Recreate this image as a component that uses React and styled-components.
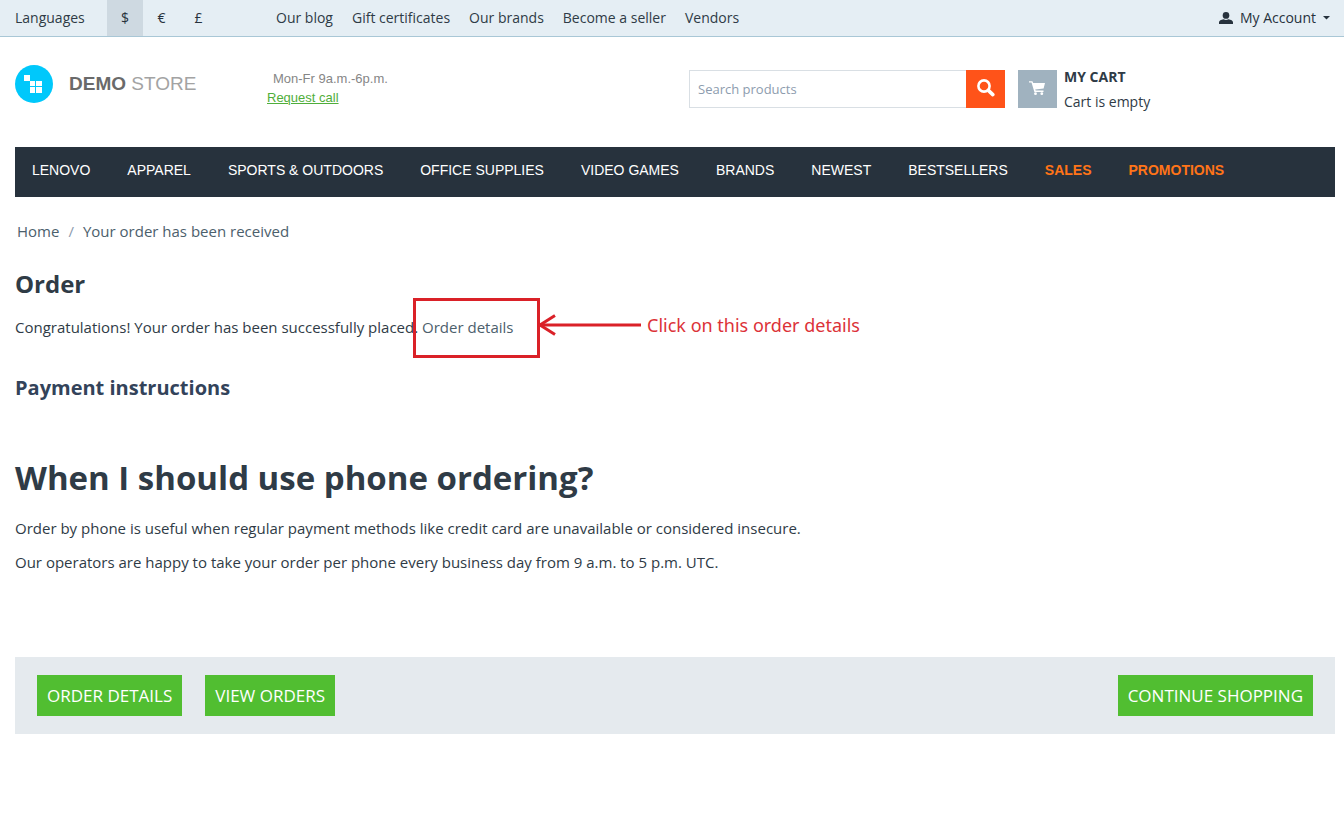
import React from "react";
import styled, { createGlobalStyle } from "styled-components";

const GlobalStyle = createGlobalStyle`
  *, *::before, *::after { box-sizing: border-box; }
  body {
    margin: 0;
    background: #fff;
    color: #2f3b46;
    font-family: "Open Sans", "Noto Sans", sans-serif;
    font-size: 15px;
    line-height: 24px;
  }
  h1, h2, h3, p, ul, ol { margin: 0; padding: 0; }
  ul, ol { list-style: none; }
  a { color: inherit; text-decoration: none; }
  button, input { font: inherit; border: 0; border-radius: 0; }
  button { cursor: pointer; }
`;

const TopBar = styled.div`
  display: flex;
  align-items: stretch;
  height: 37px;
  padding: 0 14px 0 15px;
  background: #e5eef4;
  border-bottom: 1px solid #a9c7d6;
  font-size: 14px;
  line-height: 36px;
`;

const LanguageLink = styled.a`
  width: 92px;
`;

const Currencies = styled.div`
  display: flex;
  width: 169px;
`;

const CurrencyButton = styled.button`
  width: ${(p) => (p.$active ? 36 : 37)}px;
  padding: 0;
  color: #27323d;
  background: ${(p) => (p.$active ? "#ced9e1" : "transparent")};
`;

const QuickLinks = styled.ul`
  display: flex;
  gap: 19px;
  flex: 1;
`;

const AccountButton = styled.button`
  display: flex;
  align-items: center;
  gap: 7px;
  padding: 0;
  color: #27323d;
  background: transparent;
`;

const Header = styled.header`
  display: flex;
  align-items: flex-start;
  height: 110px;
  padding: 28px 9px 0 15px;
`;

const Logo = styled.a`
  display: flex;
  align-items: center;
  gap: 16px;
  width: 252px;
  font-family: "Liberation Sans", Arial, sans-serif;
  font-size: 19px;
  line-height: 38px;
  color: #a3a3a3;

  b { color: #6a6a6a; }
`;

const Hours = styled.div`
  flex: 1;
  padding-top: 4px;
  font-family: "Liberation Sans", Arial, sans-serif;
  font-size: 13px;
  line-height: 19px;
  color: #868686;

  p { padding-left: 6px; }
  a { color: #4fae3a; text-decoration: underline; }
`;

const SearchForm = styled.form`
  display: flex;
  width: 316px;
  height: 38px;
  margin: 5px 13px 0 0;
`;

const SearchInput = styled.input`
  flex: 1;
  min-width: 0;
  padding: 0 8px;
  border: 1px solid #d9dfe4;
  border-right: 0;
  font-size: 13px;
  color: #27323d;
  background: #fff;

  &::placeholder { color: #8d9cae; opacity: 1; }
`;

const SearchButton = styled.button`
  display: grid;
  place-items: center;
  width: 39px;
  padding: 0;
  background: #ff5319;
`;

const Cart = styled.a`
  display: flex;
  gap: 7px;
  width: 317px;
  margin-top: 5px;
  font-size: 14px;
  line-height: 25px;
`;

const CartIconBox = styled.span`
  display: grid;
  place-items: center;
  width: 39px;
  height: 38px;
  background: #a0b2bf;
`;

const CartText = styled.span`
  display: flex;
  flex-direction: column;
  margin-top: -6px;
`;

const MainMenu = styled.nav`
  margin: 0 9px 0 15px;
  background: #27323d;

  ul {
    display: flex;
    height: 50px;
    padding-left: 17px;
    gap: 37px;
    font-family: "Liberation Sans", Arial, sans-serif;
    font-size: 14px;
    line-height: 46px;
    white-space: nowrap;
  }
`;

const MenuLink = styled.a`
  color: ${(p) => (p.$hot ? "#ff7418" : "#fff")};
  font-weight: ${(p) => (p.$hot ? 700 : 400)};
`;

const Content = styled.main`
  padding: 0 9px 0 15px;
`;

const Breadcrumbs = styled.ol`
  display: flex;
  gap: 9px;
  padding: 22px 2px 0;
  color: #4c606c;

  span { color: #8d9cae; }
`;

const PageTitle = styled.h2`
  margin-top: 25px;
  font-size: 24px;
  line-height: 32px;
`;

const Notice = styled.p`
  margin-top: 15px;
`;

const Highlighted = styled.span`
  position: relative;
`;

const OrderLink = styled.a`
  color: #4c606c;
`;

const Callout = styled.span`
  position: absolute;
  top: -19px;
  left: -9px;
  display: flex;
  align-items: center;
  pointer-events: none;
  color: #dc3238;
  font-family: "Noto Sans", "Open Sans", sans-serif;
  font-size: 18px;
  line-height: 52px;
  white-space: nowrap;
`;

const CalloutFrame = styled.span`
  width: 127px;
  height: 60px;
  border: 3px solid #da2128;
`;

const CalloutArrow = styled.svg`
  width: 103px;
  height: 22px;
  margin: 0 6px 6px -2px;
`;

const CalloutText = styled.span`
  padding-bottom: 6px;
`;

const SectionTitle = styled.h3`
  margin-top: 35px;
  font-size: 20px;
  line-height: 28px;
  color: #33435a;
`;

const Instructions = styled.section`
  margin-top: 52px;

  h1 {
    font-size: 33px;
    line-height: 48px;
  }
  p { margin-top: 10px; }
  h1 + p { margin-top: 14px; }
`;

const Actions = styled.div`
  display: flex;
  gap: 23px;
  margin-top: 83px;
  padding: 18px 22px;
  background: #e5eaee;
`;

const ActionButton = styled.button`
  height: 41px;
  padding: 0 10px;
  margin-left: ${(p) => (p.$end ? "auto" : 0)};
  color: #fff;
  background: #51be31;
  font-size: 17px;
  line-height: 41px;
  white-space: nowrap;
`;

const currencies = ["$", "€", "£"];
const quickLinks = ["Our blog", "Gift certificates", "Our brands", "Become a seller", "Vendors"];
const menu = [
  "LENOVO", "APPAREL", "SPORTS & OUTDOORS", "OFFICE SUPPLIES", "VIDEO GAMES",
  "BRANDS", "NEWEST", "BESTSELLERS", "SALES", "PROMOTIONS",
];
const hotItems = ["SALES", "PROMOTIONS"];

const LogoMark = () => (
  <svg width="38" height="38" viewBox="0 0 38 38" aria-hidden="true">
    <circle cx="19" cy="19" r="19" fill="#00c8fb" />
    <path
      fill="#fff"
      d="M9 10h6v6H9zM15 16h5v5h-5zM21 16h6v5h-6zM15 22h5v6h-5zM21 22h6v6h-6z"
    />
  </svg>
);

const UserIcon = () => (
  <svg width="14" height="12" viewBox="0 0 14 12" fill="#27323d" aria-hidden="true">
    <ellipse cx="7" cy="3.4" rx="3.3" ry="3.4" />
    <path d="M0 12V10.2C0 8.6 2 7.6 4.6 7.2Q7 8.6 9.4 7.2C12 7.6 14 8.6 14 10.2V12z" />
  </svg>
);

const Caret = () => (
  <svg width="7" height="4" viewBox="0 0 7 4" fill="#27323d" aria-hidden="true">
    <path d="M0 0h7L3.5 3.6z" />
  </svg>
);

const SearchIcon = () => (
  <svg width="18" height="20" viewBox="0 0 18 20" fill="none" stroke="#fff" aria-hidden="true">
    <circle cx="7" cy="7" r="5.6" strokeWidth="2.6" />
    <path d="M11.6 11.6l4.2 4" strokeWidth="3.6" strokeLinecap="round" />
  </svg>
);

const CartIcon = () => (
  <svg width="17" height="17" viewBox="0 0 17 17" fill="#fff" aria-hidden="true">
    <path d="M0 0.2h3.4l.8 1.8H16l-1.4 5.4-8.4 1 .5 1.2h7.8v1.4H5.4L2.5 1.6H0z" />
    <circle cx="6.5" cy="12.7" r="1.4" />
    <circle cx="12.8" cy="12.7" r="1.4" />
  </svg>
);

export default function App() {
  return (
    <>
      <GlobalStyle />
      <TopBar>
        <LanguageLink href="#languages">Languages</LanguageLink>
        <Currencies>
          {currencies.map((c, i) => (
            <CurrencyButton key={c} type="button" $active={i === 0}>{c}</CurrencyButton>
          ))}
        </Currencies>
        <QuickLinks>
          {quickLinks.map((label) => (
            <li key={label}><a href="#page">{label}</a></li>
          ))}
        </QuickLinks>
        <AccountButton type="button">
          <UserIcon />
          My Account
          <Caret />
        </AccountButton>
      </TopBar>

      <Header>
        <Logo href="#home">
          <LogoMark />
          <span><b>DEMO</b> STORE</span>
        </Logo>
        <Hours>
          <p>Mon-Fr 9a.m.-6p.m.</p>
          <a href="#call">Request call</a>
        </Hours>
        <SearchForm role="search">
          <SearchInput type="text" placeholder="Search products" aria-label="Search products" />
          <SearchButton type="submit" aria-label="Search"><SearchIcon /></SearchButton>
        </SearchForm>
        <Cart href="#cart">
          <CartIconBox><CartIcon /></CartIconBox>
          <CartText>
            <b>MY CART</b>
            <span>Cart is empty</span>
          </CartText>
        </Cart>
      </Header>

      <MainMenu>
        <ul>
          {menu.map((label) => (
            <li key={label}>
              <MenuLink href="#category" $hot={hotItems.includes(label)}>{label}</MenuLink>
            </li>
          ))}
        </ul>
      </MainMenu>

      <Content>
        <Breadcrumbs>
          <li><a href="#home">Home</a></li>
          <li><span>/</span></li>
          <li>Your order has been received</li>
        </Breadcrumbs>

        <PageTitle>Order</PageTitle>
        <Notice>
          Congratulations! Your order has been successfully placed.{" "}
          <Highlighted>
            <OrderLink href="#order">Order details</OrderLink>
            <Callout>
              <CalloutFrame />
              <CalloutArrow viewBox="0 0 103 22" fill="none" stroke="#da2128" strokeWidth="3" aria-hidden="true">
                <path d="M2 11H103" />
                <path d="M17 1.5L2 11l15 9.5" />
              </CalloutArrow>
              <CalloutText>Click on this order details</CalloutText>
            </Callout>
          </Highlighted>
        </Notice>

        <SectionTitle>Payment instructions</SectionTitle>

        <Instructions>
          <h1>When I should use phone ordering?</h1>
          <p>
            Order by phone is useful when regular payment methods like credit card are unavailable
            or considered insecure.
          </p>
          <p>
            Our operators are happy to take your order per phone every business day from 9 a.m. to
            5 p.m. UTC.
          </p>
        </Instructions>

        <Actions>
          <ActionButton type="button">ORDER DETAILS</ActionButton>
          <ActionButton type="button">VIEW ORDERS</ActionButton>
          <ActionButton type="button" $end>CONTINUE SHOPPING</ActionButton>
        </Actions>
      </Content>
    </>
  );
}
